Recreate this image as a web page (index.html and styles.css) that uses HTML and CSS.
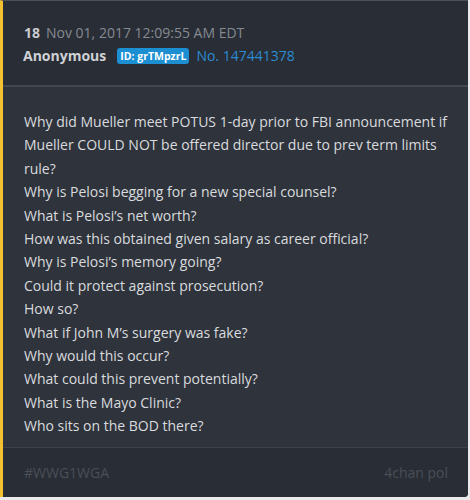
FILE: index.html
```html
<!DOCTYPE html>
<html>
<head>
<meta charset="utf-8">
<link rel="stylesheet" href="styles.css">
</head>
<body>
<div class="card">
  <div class="head">
    <div class="row"><span class="num">18</span><span class="date">Nov 01, 2017 12:09:55 AM EDT</span></div>
    <div class="row"><span class="name">Anonymous</span><span class="badge">ID: grTMpzrL</span><span class="no">No. 147441378</span></div>
  </div>
  <div class="body">
    <p>Why did Mueller meet POTUS 1-day prior to FBI announcement if Mueller COULD NOT be offered director due to prev term limits rule?<br>
Why is Pelosi begging for a new special counsel?<br>
What is Pelosi’s net worth?<br>
How was this obtained given salary as career official?<br>
Why is Pelosi’s memory going?<br>
Could it protect against prosecution?<br>
How so?<br>
What if John M’s surgery was fake?<br>
Why would this occur?<br>
What could this prevent potentially?<br>
What is the Mayo Clinic?<br>
Who sits on the BOD there?</p>
  </div>
  <div class="foot"><span>#WWG1WGA</span><span>4chan pol</span></div>
</div>
</body>
</html>
```
FILE: styles.css
```css
html, body { margin: 0; padding: 0; background: #e9eaec; }
body { font-family: "Open Sans", "DejaVu Sans", sans-serif; }
.card {
  width: 468px;
  height: 497px;
  box-sizing: border-box;
  background: #2f333c;
  border-left: 3px solid #f2c233;
  border-top: 1px solid #4b5059;
  border-radius: 0 0 4px 0;
  display: flex;
  flex-direction: column;
  overflow: hidden;
}
.head {
  background: #292d36;
  height: 86px;
  box-sizing: border-box;
  padding: 20px 21px 0 21px;
  border-bottom: 2px solid #424750;
}
.row { display: flex; align-items: center; height: 23px; font-size: 14px; }
.num { color: #c9cbce; font-weight: 700; margin-right: 6px; }
.date { color: #858a92; }
.name { color: #cfd1d4; font-weight: 700; margin-left: -1px; margin-right: 11px; }
.badge {
  background: #1b8fd1; color: #fff; font-weight: 700; font-size: 10.5px;
  padding: 0 3px; border-radius: 3px; line-height: 16px; margin-right: 7px;
}
.no { color: #2b8cd0; }
.body { flex: 1; padding: 0 21px; }
.body p { margin: 23px 0 0 0; font-size: 14px; line-height: 23.4px; color: #d9dbde; }
.foot {
  background: #292d35;
  height: 49px;
  border-top: 1px solid #3c414a;
  display: flex; justify-content: space-between; align-items: center;
  padding: 0 20px 0 21px;
  font-size: 14px; color: #4a4f58;
}
```
